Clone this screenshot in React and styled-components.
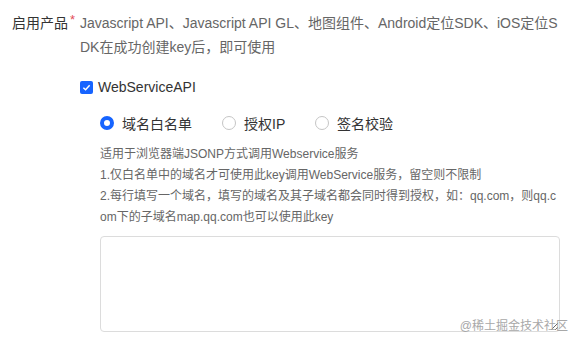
import React from 'react';
import styled, { createGlobalStyle } from 'styled-components';

const GlobalStyle = createGlobalStyle`
  body {
    margin: 0;
    background: #fff;
    font-family: "Liberation Sans", "Noto Sans CJK SC", sans-serif;
  }
`;

const blue = '#1664ff';

const Page = styled.div`
  position: relative;
  width: 579px;
  height: 344px;
  overflow: hidden;
  padding-top: 11px;
  box-sizing: border-box;
`;

const FormRow = styled.div`
  display: flex;
`;

const Label = styled.div`
  width: 80px;
  flex-shrink: 0;
  padding-left: 12px;
  box-sizing: border-box;
  font-size: 14px;
  line-height: 24px;
  color: #333;
`;

const Required = styled.span`
  color: #e34d59;
  font-size: 13px;
  vertical-align: top;
  position: relative;
  top: -3px;
  margin-left: 2px;
`;

const Content = styled.div`
  width: 482px;
`;

const Products = styled.div`
  font-size: 14px;
  line-height: 24px;
  color: #666;
  word-break: break-all;
`;

const CheckRow = styled.label`
  display: flex;
  align-items: center;
  gap: 5px;
  margin-top: 20px;
  font-size: 14px;
  color: #333;
`;

const Box = styled.span`
  width: 13px;
  height: 13px;
  border-radius: 2px;
  background: ${blue};
  display: flex;
  align-items: center;
  justify-content: center;
`;

const Sub = styled.div`
  padding-left: 20px;
`;

const RadioGroup = styled.div`
  display: flex;
  margin-top: 18px;
  font-size: 14px;
  color: #333;
`;

const RadioItem = styled.label`
  display: flex;
  align-items: center;
  gap: 8px;
  width: ${({ $w }) => $w}px;
`;

const Dot = styled.span`
  width: 14px;
  height: 14px;
  border-radius: 50%;
  box-sizing: border-box;
  border: ${({ $on }) => ($on ? `4px solid ${blue}` : '1px solid #c5c5c5')};
  background: #fff;
`;

const Help = styled.div`
  margin-top: 11px;
  font-size: 12px;
  line-height: 21px;
  color: #666;
  word-break: break-all;
  width: 462px;
`;

const Area = styled.textarea`
  display: block;
  margin-top: 8px;
  width: 460px;
  height: 96px;
  border: 1px solid #dcdcdc;
  border-radius: 4px;
  box-sizing: border-box;
  resize: vertical;
`;

const Watermark = styled.div`
  position: absolute;
  right: 11px;
  bottom: 11px;
  font-size: 12px;
  color: #a8a8a8;
`;

export default function App() {
  return (
    <Page>
      <GlobalStyle />
      <FormRow>
        <Label>
          启用产品<Required>*</Required>
        </Label>
        <Content>
          <Products>
            Javascript API、Javascript API GL、地图组件、Android定位SDK、iOS定位SDK在成功创建key后，即可使用
          </Products>
          <CheckRow>
            <Box>
              <svg width="9" height="9" viewBox="0 0 10 10">
                <path d="M1.5 5.2 L4 7.5 L8.5 2.5" fill="none" stroke="#fff" strokeWidth="1.6" />
              </svg>
            </Box>
            WebServiceAPI
          </CheckRow>
          <Sub>
            <RadioGroup>
              <RadioItem $w={122}>
                <Dot $on />
                域名白名单
              </RadioItem>
              <RadioItem $w={93}>
                <Dot />
                授权IP
              </RadioItem>
              <RadioItem $w={100}>
                <Dot />
                签名校验
              </RadioItem>
            </RadioGroup>
            <Help>
              适用于浏览器端JSONP方式调用Webservice服务
              <br />
              1.仅白名单中的域名才可使用此key调用WebService服务，留空则不限制
              <br />
              2.每行填写一个域名，填写的域名及其子域名都会同时得到授权，如：qq.com，则qq.com下的子域名map.qq.com也可以使用此key
            </Help>
            <Area />
          </Sub>
        </Content>
      </FormRow>
      <Watermark>@稀土掘金技术社区</Watermark>
    </Page>
  );
}
